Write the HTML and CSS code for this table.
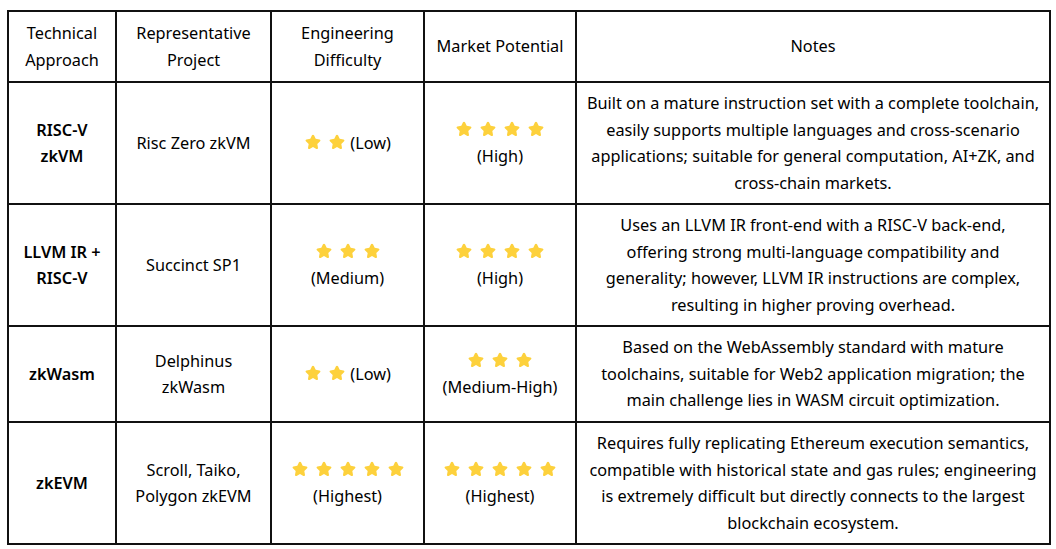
FILE: index.html
```html
<!DOCTYPE html>
<html>
<head>
<meta charset="utf-8">
<link rel="stylesheet" href="styles.css">
</head>
<body>
<svg width="0" height="0" class="defs">
  <defs>
    <symbol id="star" viewBox="0 0 24 24">
      <path d="M12 2.2c.6 0 1.1.35 1.35.9l2.25 4.65 5.05.75c1.2.18 1.7 1.66.8 2.5l-3.7 3.6.88 5.05c.2 1.2-1.06 2.1-2.14 1.53L12 18.8l-4.5 2.38c-1.08.57-2.34-.33-2.14-1.53l.88-5.05-3.7-3.6c-.9-.84-.4-2.32.8-2.5l5.05-.75 2.25-4.65c.25-.55.75-.9 1.36-.9z" fill="#FDD13C"/>
    </symbol>
  </defs>
</svg>
<div class="wrap">
<table class="grid">
  <colgroup>
    <col class="c1"><col class="c2"><col class="c3"><col class="c4"><col class="c5">
  </colgroup>
  <thead>
    <tr class="rh">
      <th>Technical<br>Approach</th>
      <th>Representative<br>Project</th>
      <th>Engineering<br>Difficulty</th>
      <th>Market Potential</th>
      <th>Notes</th>
    </tr>
  </thead>
  <tbody>
    <tr class="r1">
      <td class="name">RISC-V<br>zkVM</td>
      <td>Risc Zero zkVM</td>
      <td><span class="stars"><svg><use href="#star"/></svg><svg><use href="#star"/></svg></span> (Low)</td>
      <td><span class="stars"><svg><use href="#star"/></svg><svg><use href="#star"/></svg><svg><use href="#star"/></svg><svg><use href="#star"/></svg></span><br>(High)</td>
      <td class="note">Built on a mature instruction set with a complete toolchain,<br>easily supports multiple languages and cross-scenario<br>applications; suitable for general computation, AI+ZK, and<br>cross-chain markets.</td>
    </tr>
    <tr class="r2">
      <td class="name">LLVM IR +<br>RISC-V</td>
      <td>Succinct SP1</td>
      <td><span class="stars"><svg><use href="#star"/></svg><svg><use href="#star"/></svg><svg><use href="#star"/></svg></span><br>(Medium)</td>
      <td><span class="stars"><svg><use href="#star"/></svg><svg><use href="#star"/></svg><svg><use href="#star"/></svg><svg><use href="#star"/></svg></span><br>(High)</td>
      <td class="note">Uses an LLVM IR front-end with a RISC-V back-end,<br>offering strong multi-language compatibility and<br>generality; however, LLVM IR instructions are complex,<br>resulting in higher proving overhead.</td>
    </tr>
    <tr class="r3">
      <td class="name">zkWasm</td>
      <td>Delphinus<br>zkWasm</td>
      <td><span class="stars"><svg><use href="#star"/></svg><svg><use href="#star"/></svg></span> (Low)</td>
      <td><span class="stars"><svg><use href="#star"/></svg><svg><use href="#star"/></svg><svg><use href="#star"/></svg></span><br>(Medium-High)</td>
      <td class="note">Based on the WebAssembly standard with mature<br>toolchains, suitable for Web2 application migration; the<br>main challenge lies in WASM circuit optimization.</td>
    </tr>
    <tr class="r4">
      <td class="name">zkEVM</td>
      <td>Scroll, Taiko,<br>Polygon zkEVM</td>
      <td><span class="stars"><svg><use href="#star"/></svg><svg><use href="#star"/></svg><svg><use href="#star"/></svg><svg><use href="#star"/></svg><svg><use href="#star"/></svg></span><br>(Highest)</td>
      <td><span class="stars"><svg><use href="#star"/></svg><svg><use href="#star"/></svg><svg><use href="#star"/></svg><svg><use href="#star"/></svg><svg><use href="#star"/></svg></span><br>(Highest)</td>
      <td class="note">Requires fully replicating Ethereum execution semantics,<br>compatible with historical state and gas rules; engineering<br>is extremely difficult but directly connects to the largest<br>blockchain ecosystem.</td>
    </tr>
  </tbody>
</table>
</div>
</body>
</html>
```

FILE: styles.css
```css
html, body {
  margin: 0;
  padding: 0;
  background: #ffffff;
}
.defs {
  position: absolute;
  width: 0;
  height: 0;
}
.wrap {
  padding: 10px 0 0 7px;
}
.grid {
  border-collapse: collapse;
  table-layout: fixed;
  width: 1042px;
  font-family: "Noto Sans", "Open Sans", sans-serif;
  font-size: 16.3px;
  line-height: 26.5px;
  color: #000000;
}
.c1 { width: 108px; }
.c2 { width: 155px; }
.c3 { width: 153px; }
.c4 { width: 152px; }
.c5 { width: 474px; }
.grid th,
.grid td {
  border: 2px solid #111;
  text-align: center;
  vertical-align: middle;
  padding: 0 4px;
  font-weight: 400;
  white-space: nowrap;
}
.rh { height: 71px; }
.r1 { height: 122px; }
.r2 { height: 122px; }
.r3 { height: 96px; }
.r4 { height: 122px; }
.grid td.name {
  font-weight: 600;
}
.stars {
  display: inline-flex;
  gap: 6px;
  vertical-align: -2px;
}
.stars svg {
  width: 18px;
  height: 18px;
}
```
